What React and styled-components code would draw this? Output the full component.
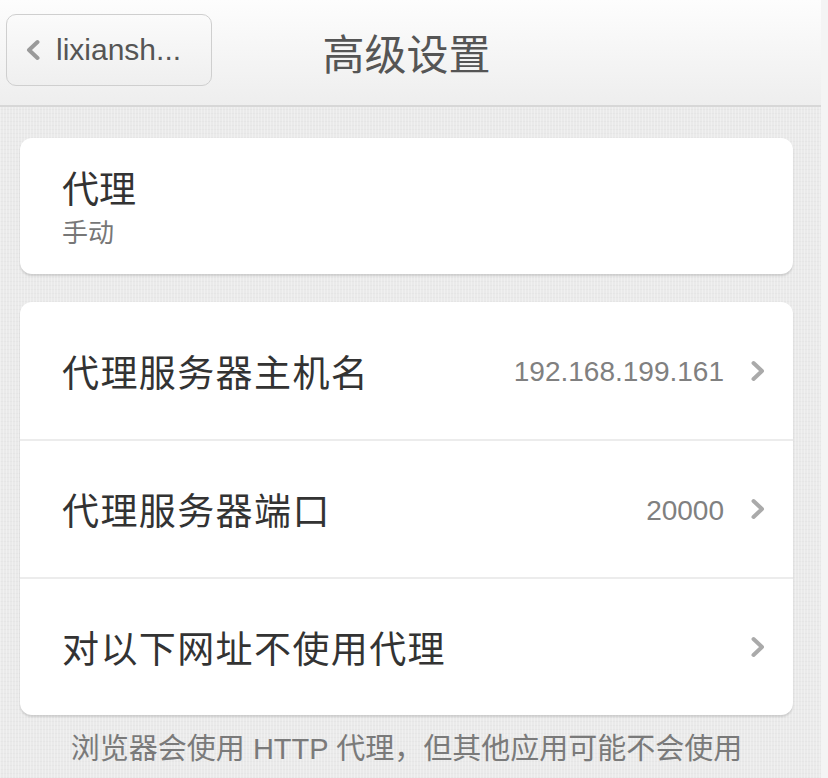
import React from 'react';
import styled, { createGlobalStyle } from 'styled-components';

const GlobalStyle = createGlobalStyle`
    html, body {
        margin: 0;
        padding: 0;
    }
    body {
        font-family: "Liberation Sans", "Noto Sans CJK SC", sans-serif;
        background: #e9e9e9;
    }
`;

const Page = styled.div`
    display: flex;
    min-height: 778px;
`;

const Main = styled.div`
    flex: 1;
    display: flex;
    flex-direction: column;
    background-color: #eaeaea;
    background-image:
        repeating-linear-gradient(90deg, rgba(255,255,255,0.3) 0 1px, transparent 1px 3px),
        repeating-linear-gradient(0deg, rgba(0,0,0,0.02) 0 1px, transparent 1px 4px);
`;

const Gutter = styled.div`
    width: 7px;
    background: #f4f4f4;
`;

const Header = styled.header`
    display: grid;
    grid-template-columns: 1fr auto 1fr;
    align-items: start;
    padding: 14px 14px 0 6px;
    box-sizing: border-box;
    height: 107px;
    background: linear-gradient(#fdfdfd, #eeeeee);
    border-bottom: 2px solid #d7d7d7;
`;

const BackButton = styled.button`
    justify-self: start;
    display: flex;
    align-items: center;
    gap: 16px;
    width: 206px;
    height: 72px;
    padding: 0 0 0 19px;
    border: 1px solid #cfcfcf;
    border-radius: 10px;
    background: linear-gradient(#fbfbfb, #efefef);
    color: #555;
    font-family: "Liberation Sans", sans-serif;
    font-size: 30px;
    cursor: pointer;
`;

const Title = styled.h1`
    margin: 2px 0 0;
    line-height: 72px;
    font-size: 42px;
    font-weight: normal;
    color: #555;
    font-family: "Noto Sans CJK SC", sans-serif;
`;

const Content = styled.div`
    display: flex;
    flex-direction: column;
    gap: 28px;
    padding: 31px 28px 0 20px;
`;

const Card = styled.div`
    background: #fff;
    border-radius: 12px;
    box-shadow: 0 2px 2px rgba(0, 0, 0, 0.13);
    overflow: hidden;
`;

const ModeCard = styled(Card)`
    padding: 27px 0 26px 42px;
`;

const ModeTitle = styled.div`
    font-family: "Noto Sans CJK SC", sans-serif;
    font-size: 37px;
    line-height: 44px;
    color: #333;
`;

const ModeSub = styled.div`
    margin-top: 5px;
    font-family: "Noto Sans CJK SC", sans-serif;
    font-size: 26px;
    line-height: 34px;
    color: #777;
`;

const Row = styled.div`
    display: flex;
    align-items: center;
    height: ${p => (p.$first ? 137 : 136)}px;
    padding: 0 28px 0 42px;
    border-top: ${p => (p.$first ? 'none' : '2px solid #ececec')};
`;

const RowLabel = styled.div`
    flex: 1;
    font-family: "Noto Sans CJK SC", sans-serif;
    font-size: 37px;
    letter-spacing: 1.4px;
    color: #333;
`;

const RowValue = styled.div`
    font-family: "Liberation Sans", sans-serif;
    font-size: 28px;
    color: #808080;
    margin: 3px 27px 0 0;
`;

const Note = styled.p`
    margin: 14px 0 0;
    padding: 0 28px 0 20px;
    text-align: center;
    font-size: 29px;
    line-height: 40px;
    color: #7a7a7a;
    font-family: "Liberation Sans", "Noto Sans CJK SC", sans-serif;
`;

const Chevron = ({ dir = 'right', color = '#aaa' }) => (
    <svg width="14" height="22" viewBox="0 0 14 22">
        <path
            d={dir === 'right' ? 'M2.5 3 L11 11 L2.5 19' : 'M11.5 3 L3 11 L11.5 19'}
            fill="none"
            stroke={color}
            strokeWidth="4"
            strokeLinecap="round"
            strokeLinejoin="round"
        />
    </svg>
);

const rows = [
    { label: '代理服务器主机名', value: '192.168.199.161' },
    { label: '代理服务器端口', value: '20000' },
    { label: '对以下网址不使用代理', value: '' },
];

const App = () => {
    return (
        <Page>
            <GlobalStyle />
            <Main>
                <Header>
                    <BackButton>
                        <Chevron dir='left' color='#9a9a9a' />
                        <span>lixiansh...</span>
                    </BackButton>
                    <Title>高级设置</Title>
                    <div />
                </Header>
                <Content>
                    <ModeCard>
                        <ModeTitle>代理</ModeTitle>
                        <ModeSub>手动</ModeSub>
                    </ModeCard>
                    <Card>
                        {rows.map((r, i) => (
                            <Row key={r.label} $first={i === 0}>
                                <RowLabel>{r.label}</RowLabel>
                                {r.value && <RowValue>{r.value}</RowValue>}
                                <Chevron />
                            </Row>
                        ))}
                    </Card>
                </Content>
                <Note>浏览器会使用 HTTP 代理，但其他应用可能不会使用</Note>
            </Main>
            <Gutter />
        </Page>
    );
};

export default App;
